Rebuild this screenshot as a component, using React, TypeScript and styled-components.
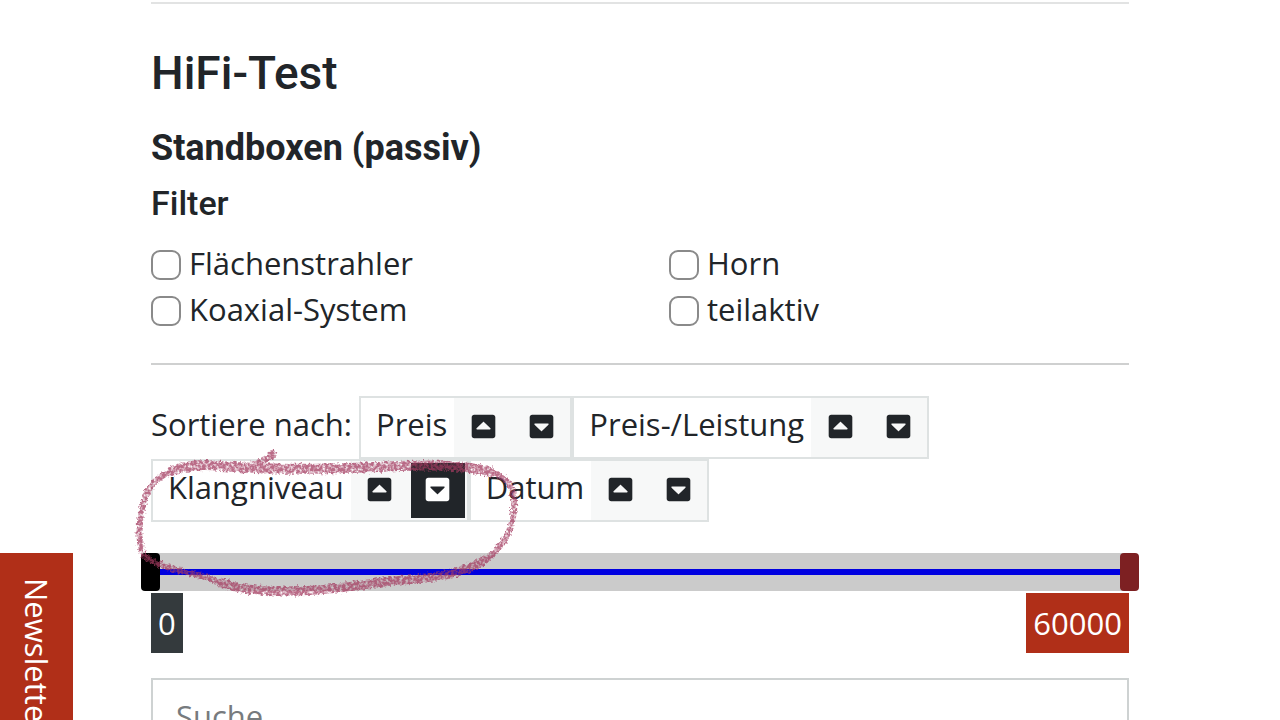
import React, { useState } from "react";
import styled, { createGlobalStyle } from "styled-components";
import { FaCaretSquareDown, FaCaretSquareUp } from "react-icons/fa";

const GlobalStyle = createGlobalStyle`
  *, *::before, *::after { box-sizing: border-box; }
  body {
    margin: 0;
    background: #fff;
    color: #212529;
    font-family: "Open Sans", "Noto Sans", sans-serif;
    font-size: 31px;
    line-height: 46px;
  }
  button, input { font: inherit; color: inherit; }
`;

const Page = styled.main`
  padding: 2px 151px 32px;
`;

const Rule = styled.hr<{ $color: string }>`
  height: 2px;
  margin: 0;
  border: 0;
  background: ${(p) => p.$color};
`;

const headingFont = `
  margin: 0;
  font-family: Roboto, sans-serif;
  font-weight: 500;
`;

const Title = styled.h1`
  ${headingFont}
  margin-top: 41px;
  font-size: 46px;
  line-height: 56px;
`;

const Category = styled.h2`
  ${headingFont}
  margin-top: 25px;
  font-size: 36px;
  line-height: 44px;
  font-weight: 700;
`;

const FilterTitle = styled.h3`
  ${headingFont}
  margin-top: 13px;
  font-size: 34px;
  line-height: 40px;
`;

const Filters = styled.div`
  display: grid;
  grid-template-columns: 1fr 1fr;
  column-gap: 58px;
  margin: 17px 0 31px;
`;

const FilterLabel = styled.label`
  display: flex;
  align-items: center;
  gap: 8px;
`;

const Checkbox = styled.input`
  appearance: none;
  flex: none;
  width: 30px;
  height: 30px;
  margin: 4px 0 0;
  border: 2px solid #8a8a8a;
  border-radius: 9px;
  background: #fff;
  &:checked { background: #212529; }
`;

const Controls = styled.section`
  position: relative;
  padding-top: 31px;
`;

const SortBar = styled.div`
  display: flex;
  flex-wrap: wrap;
`;

const SortCaption = styled.span`
  margin: 5px 7px 0 0;
`;

const SortGroup = styled.div`
  display: flex;
  height: 63px;
  border: 2px solid #dee2e2;
`;

const SortName = styled.span`
  padding: 3px 7px 0 15px;
`;

const SortButton = styled.button<{ $active: boolean }>`
  display: flex;
  align-items: center;
  justify-content: center;
  width: 58px;
  padding: 0 0 2px;
  border: 2px solid #f7f8f8;
  background: ${(p) => (p.$active ? "#212529" : "#f7f8f8")};
  color: ${(p) => (p.$active ? "#fff" : "#212529")};
  font-size: 27px;
`;

const Slider = styled.div`
  display: grid;
  height: 38px;
  margin: 31px -10px 0;
`;

const Track = styled.div`
  grid-area: 1 / 1;
  align-self: stretch;
  margin: 0 10px;
  background: linear-gradient(#0000e0, #0000e0) center / 100% 6px no-repeat #cbcbcb;
`;

const Range = styled.input<{ $thumb: string }>`
  grid-area: 1 / 1;
  appearance: none;
  width: 100%;
  height: 38px;
  margin: 0;
  background: transparent;
  pointer-events: none;
  &::-webkit-slider-thumb {
    appearance: none;
    width: 19px;
    height: 38px;
    border-radius: 4px;
    background: ${(p) => p.$thumb};
    pointer-events: auto;
  }
`;

const Values = styled.div`
  display: flex;
  justify-content: space-between;
  margin-top: 2px;
`;

const Value = styled.output<{ $bg: string }>`
  padding: 7px;
  background: ${(p) => p.$bg};
  color: #fff;
`;

const Search = styled.input`
  display: block;
  width: 100%;
  height: 76px;
  margin-top: 25px;
  padding: 0 23px;
  border: 2px solid #ced2d2;
  border-radius: 0;
  background: #fff;
  &::placeholder { color: #777b7e; opacity: 1; }
`;

const NewsletterTab = styled.a`
  position: fixed;
  left: 0;
  top: 553px;
  width: 73px;
  padding: 25px 0;
  background: #b02f18;
  color: #fff;
  line-height: 73px;
  text-decoration: none;
  writing-mode: vertical-rl;
`;

const Marker = styled.svg`
  position: absolute;
  left: -21px;
  top: 75px;
  width: 400px;
  height: 160px;
  pointer-events: none;
`;

const filters = ["Flächenstrahler", "Horn", "Koaxial-System", "teilaktiv"];
const criteria = ["Preis", "Preis-/Leistung", "Klangniveau", "Datum"];

function MarkerCircle() {
  return (
    <Marker viewBox="130 440 400 160" aria-hidden="true">
      <defs>
        <filter id="crayon" x="130" y="440" width="400" height="160" filterUnits="userSpaceOnUse">
          <feTurbulence type="fractalNoise" baseFrequency="0.35" numOctaves="3" seed="8" result="noise" />
          <feDisplacementMap in="SourceGraphic" in2="noise" scale="6" xChannelSelector="R" yChannelSelector="G" result="rough" />
          <feColorMatrix in="noise" type="matrix" values="0 0 0 0 0  0 0 0 0 0  0 0 0 0 0  0 0 0 2.4 -0.4" result="grain" />
          <feComposite in="rough" in2="grain" operator="in" result="drawn" />
          <feGaussianBlur in="drawn" stdDeviation="0.6" />
        </filter>
      </defs>
      <g filter="url(#crayon)" fill="none" stroke="#a33a60" strokeLinecap="round" strokeLinejoin="round" opacity="0.75">
        <path
          strokeWidth="6"
          d="M143 554C138 541 139 524 142 509C146 489 153 481 164 475C182 465 202 464 222 466C267 470 326 469 377 467C420 464 471 465 496 474C514 482 515 495 514 512C511 537 497 553 480 564C455 578 421 579 390 581C355 586 319 592 279 591C255 591 231 587 211 579C192 572 154 568 143 554"
        />
        <path strokeWidth="10" d="M172 471C188 465 202 464 222 466C267 470 326 469 377 467C420 464 466 465 490 472" />
        <path strokeWidth="9" d="M484 560C455 578 421 579 390 581C355 586 319 592 279 591C255 591 236 588 222 583" />
        <path strokeWidth="7" d="M273 454C262 462 253 467 243 470" />
      </g>
    </Marker>
  );
}

export default function App() {
  const [active, setActive] = useState("Klangniveau-desc");
  const [min, setMin] = useState(0);
  const [max, setMax] = useState(60000);

  return (
    <>
      <GlobalStyle />
      <Page>
        <Rule $color="#e2e3e3" />
        <Title>HiFi-Test</Title>
        <Category>Standboxen (passiv)</Category>
        <FilterTitle>Filter</FilterTitle>
        <Filters>
          {filters.map((name) => (
            <FilterLabel key={name}>
              <Checkbox type="checkbox" />
              {name}
            </FilterLabel>
          ))}
        </Filters>
        <Rule $color="#cfd0d0" />
        <Controls>
          <SortBar>
            <SortCaption>Sortiere nach:</SortCaption>
            {criteria.map((name) => (
              <SortGroup key={name}>
                <SortName>{name}</SortName>
                <SortButton
                  type="button"
                  aria-label={`${name} aufsteigend`}
                  $active={active === `${name}-asc`}
                  onClick={() => setActive(`${name}-asc`)}
                >
                  <FaCaretSquareUp />
                </SortButton>
                <SortButton
                  type="button"
                  aria-label={`${name} absteigend`}
                  $active={active === `${name}-desc`}
                  onClick={() => setActive(`${name}-desc`)}
                >
                  <FaCaretSquareDown />
                </SortButton>
              </SortGroup>
            ))}
          </SortBar>
          <Slider>
            <Track />
            <Range
              type="range"
              aria-label="Preis von"
              min={0}
              max={60000}
              value={min}
              $thumb="#000"
              onChange={(e) => setMin(Math.min(Number(e.target.value), max))}
            />
            <Range
              type="range"
              aria-label="Preis bis"
              min={0}
              max={60000}
              value={max}
              $thumb="#7d2022"
              onChange={(e) => setMax(Math.max(Number(e.target.value), min))}
            />
          </Slider>
          <MarkerCircle />
        </Controls>
        <Values>
          <Value $bg="#343a3d">{min}</Value>
          <Value $bg="#b02f18">{max}</Value>
        </Values>
        <Search type="search" placeholder="Suche" aria-label="Suche" />
      </Page>
      <NewsletterTab href="#newsletter">Newsletter</NewsletterTab>
    </>
  );
}
